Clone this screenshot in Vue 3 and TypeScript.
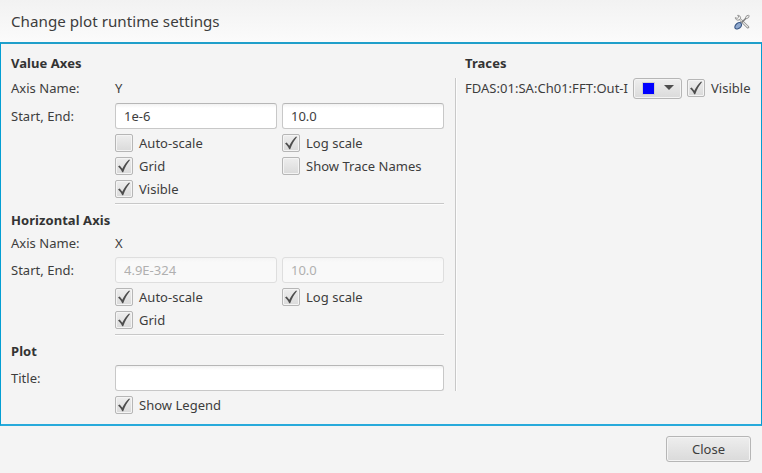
<script setup lang="ts">
import { ref } from 'vue'

interface Check { id: string; label: string; checked: boolean; col: number; row: number }

const yStart = ref('1e-6')
const yEnd = ref('10.0')
const xStart = ref('4.9E-324')
const xEnd = ref('10.0')
const plotTitle = ref('')

const checks = ref<Check[]>([
  { id: 'y-auto', label: 'Auto-scale', checked: false, col: 2, row: 4 },
  { id: 'y-log', label: 'Log scale', checked: true, col: 3, row: 4 },
  { id: 'y-grid', label: 'Grid', checked: true, col: 2, row: 5 },
  { id: 'y-names', label: 'Show Trace Names', checked: false, col: 3, row: 5 },
  { id: 'y-visible', label: 'Visible', checked: true, col: 2, row: 6 },
  { id: 'x-auto', label: 'Auto-scale', checked: true, col: 2, row: 11 },
  { id: 'x-log', label: 'Log scale', checked: true, col: 3, row: 11 },
  { id: 'x-grid', label: 'Grid', checked: true, col: 2, row: 12 },
  { id: 'legend', label: 'Show Legend', checked: true, col: 2, row: 16 },
])
const traceVisible = ref(true)
</script>

<template>
  <div class="dialog">
    <header class="header">
      <span class="title">Change plot runtime settings</span>
      <svg class="tools" width="16" height="16" viewBox="0 0 16 16">
        <path d="M14 13.2 7 6.4" stroke="#8a8a8a" stroke-width="2.6" stroke-linecap="round" />
        <path d="M13.8 13 6 5.4" stroke="#ececea" stroke-width="1.1" stroke-linecap="round" />
        <path d="M1.3 3.6C1.2 5.4 3 6.6 5 6L6.6 4.8C6.9 2.6 5.4 1.1 3.6 1.3L4.8 3 3.2 4.4Z" fill="#f2f2f0" stroke="#8a8a8a" stroke-width=".9" />
        <path d="M7.6 8.6 12.2 4" stroke="#808080" stroke-width="1.5" />
        <path d="M11.6 3.6 12.6 1.8 14.6 1.2 15.2 1.8 14.6 3.6 12.7 4.6Z" fill="#f0f0f0" stroke="#8a8a8a" stroke-width=".9" />
        <path d="M6.2 8.5C3.9 8.2 1 10.6.8 13c0 1.8 1.7 2.4 3.2 1.8 2-.8 3.6-2.7 3.6-4.6Z" fill="#8fa9cf" stroke="#3b5885" stroke-width="1.1" />
      </svg>
    </header>

    <main class="content">
      <section class="settings">
        <h2 class="heading r1">Value Axes</h2>
        <span class="label r2">Axis Name:</span>
        <span class="label value r2">Y</span>
        <span class="label r3">Start, End:</span>
        <input v-model="yStart" class="field c2 r3" />
        <input v-model="yEnd" class="field c3 r3" />
        <div class="rule r7"></div>

        <h2 class="heading lower r8">Horizontal Axis</h2>
        <span class="label r9">Axis Name:</span>
        <span class="label value r9">X</span>
        <span class="label r10">Start, End:</span>
        <input v-model="xStart" class="field c2 r10" disabled />
        <input v-model="xEnd" class="field c3 r10" disabled />
        <div class="rule r13"></div>

        <h2 class="heading lower r14">Plot</h2>
        <span class="label r15">Title:</span>
        <input v-model="plotTitle" class="field wide r15" />

        <label
          v-for="c in checks"
          :key="c.id"
          class="check"
          :style="{ gridColumn: c.col, gridRow: c.row }"
        >
          <input v-model="c.checked" class="native" type="checkbox" />
          <span class="box">
            <svg v-if="c.checked" width="12" height="14" viewBox="0 0 12 14"><path d="M0 7.6 1.7 6.6 4.3 9.8C6 6 8.2 2.8 11.1.4L12 .9C9.2 4.2 7 8.4 5.2 13.2H4.2C3.2 11 1.8 9 0 7.6Z" /></svg>
          </span>
          {{ c.label }}
        </label>
      </section>

      <div class="divider"></div>

      <section class="traces">
        <h2 class="heading">Traces</h2>
        <div class="trace">
          <span class="trace-name">FDAS:01:SA:Ch01:FFT:Out-I</span>
          <button class="color" type="button" aria-label="Trace color">
            <span class="swatch"></span>
            <span class="arrow"></span>
          </button>
          <label class="check">
            <input v-model="traceVisible" class="native" type="checkbox" />
            <span class="box">
              <svg v-if="traceVisible" width="12" height="14" viewBox="0 0 12 14"><path d="M0 7.6 1.7 6.6 4.3 9.8C6 6 8.2 2.8 11.1.4L12 .9C9.2 4.2 7 8.4 5.2 13.2H4.2C3.2 11 1.8 9 0 7.6Z" /></svg>
            </span>
            Visible
          </label>
        </div>
      </section>
    </main>

    <footer class="footer">
      <button class="close" type="button">Close</button>
    </footer>
  </div>
</template>

<style>
body { background: #f4f4f4; }
</style>

<style scoped>
.dialog {
  box-sizing: border-box;
  width: 762px;
  height: 473px;
  display: flex;
  flex-direction: column;
  overflow: hidden;
  background: #f4f4f4;
  color: #3d3d3d;
  font: 13px/18px "Noto Sans", sans-serif;
  letter-spacing: 0.02px;
}
.dialog * { box-sizing: border-box; }
.header {
  height: 42px;
  flex: none;
  display: flex;
  align-items: center;
  justify-content: space-between;
  padding: 2px 12px 0 11px;
  background: linear-gradient(#f2f2f2, #fbfbfb);
}
.title { font-size: 15.17px; line-height: 20px; padding-bottom: 2px; }
.tools { fill: none; }
.content {
  height: 384px;
  flex: none;
  display: flex;
  padding: 10px 10px 0;
  border: 1px solid #039ed3;
  border-top-width: 2px;
  border-bottom-width: 2px;
  box-shadow: inset 0 -1px 0 -1px #039ed3;
  border-top-color: #1f9fca;
  border-bottom-color: #27aadb;
}
.settings {
  display: grid;
  grid-template-columns: 99px 162px 162px;
  grid-template-rows: 19px 20px 26px 18px 18px 18px 2px 19px 18px 26px 18px 18px 2px 19px 26px 18px;
  gap: 5px;
  align-items: center;
  align-content: start;
}
.heading {
  margin: 0;
  font-size: 13px;
  line-height: 19px;
  font-weight: 700;
  letter-spacing: 0.06px;
  color: #333;
  grid-column: 1 / 3;
  white-space: nowrap;
}
.lower { padding-top: 2px; }
.label { grid-column: 1; }
.value { grid-column: 2; }
.c2 { grid-column: 2; }
.c3 { grid-column: 3; }
.wide { grid-column: 2 / 4; }
.r1 { grid-row: 1; }
.r2 { grid-row: 2; }
.r3 { grid-row: 3; }
.r7 { grid-row: 7; }
.r8 { grid-row: 8; }
.r9 { grid-row: 9; }
.r10 { grid-row: 10; }
.r13 { grid-row: 13; }
.r14 { grid-row: 14; }
.r15 { grid-row: 15; }
.field {
  width: 100%;
  height: 26px;
  margin: 0;
  padding: 0 8px;
  border: 1px solid #c8c8c8;
  border-top-color: #b6b6b6;
  border-radius: 3px;
  outline: none;
  background: linear-gradient(#f2f2f2, #fff 4px);
  color: #3d3d3d;
  font: inherit;
}
.field:disabled {
  border-color: #dedede;
  background: linear-gradient(#f4f4f4, #f9f9f9 4px);
  color: #b0b0b0;
}
.rule {
  grid-column: 2 / 4;
  height: 2px;
  border-top: 1px solid #c8c8c8;
  background: #fcfcfc;
}
.check {
  display: flex;
  align-items: center;
  gap: 6px;
  height: 18px;
  white-space: nowrap;
}
.native { display: none; }
.box {
  width: 18px;
  height: 18px;
  display: grid;
  place-items: center;
  border: 1px solid #b6b6b6;
  border-radius: 2px;
  background: linear-gradient(#eee, #dadada);
  box-shadow: inset 0 0 0 1px #f4f4f4;
}
.box svg { fill: #4d4d4d; }
.divider {
  width: 2px;
  height: 313px;
  margin: 24px 8px 0 11px;
  border-left: 1px solid #c8c8c8;
  background: #fcfcfc;
}
.trace {
  display: flex;
  align-items: center;
  gap: 5px;
  height: 20px;
  margin-top: 5px;
  white-space: nowrap;
}
.trace-name { width: 163px; }
.color, .close {
  border: 1px solid #b6b6b6;
  border-radius: 3px;
  background: linear-gradient(#eee, #dadada);
  box-shadow: inset 0 0 0 1px #f4f4f4;
  color: #3d3d3d;
  font: inherit;
}
.color {
  width: 49px;
  height: 21px;
  flex: none;
  display: flex;
  align-items: center;
  gap: 9px;
  padding: 0 0 0 8px;
}
.swatch { width: 13px; height: 13px; background: #00f; border: 1px solid #d0d0d0; }
.arrow {
  border: 5px solid transparent;
  border-top-color: #4d4d4d;
  border-bottom: 0;
  margin-bottom: 1px;
}
.footer {
  flex: 1;
  display: flex;
  align-items: flex-start;
  justify-content: flex-end;
  padding: 10px 11px 0 0;
}
.close { width: 85px; height: 26px; padding: 0; }
</style>
